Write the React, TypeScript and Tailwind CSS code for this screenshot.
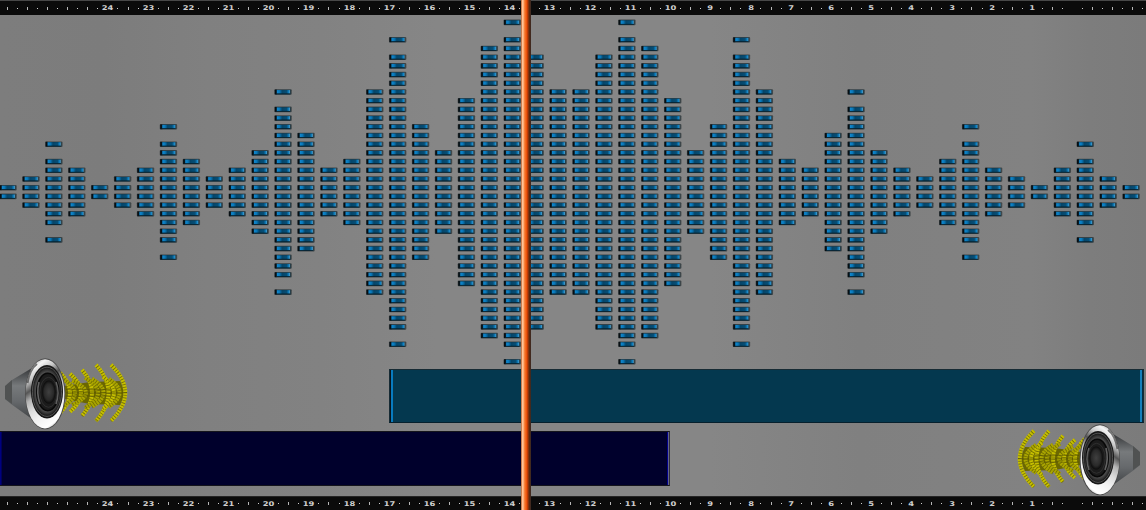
const COUNTS = [
  1, 2, 4, 3, 1, 2, 3, 6, 4, 2, 3, 5, 10, 7, 3, 4, 12, 16, 8, 5, 11, 17, 18, 16, 12,
];
const LEVELS = [...COUNTS, ...[...COUNTS].reverse()];
const PEAKS = new Set([2, 7, 12, 17, 22, 27, 32, 37, 42, 47]);
const COLUMN_STEP = 22.92;
const ROW_STEP = 8.7;

function Cell({ x, y }: { x: number; y: number }) {
  return (
    <g transform={`translate(${x} ${y})`}>
      <rect x="-8.8" y="-2.8" width="17.4" height="5.6" rx="1" fill="#404749" />
      <rect x="-8.3" y="-2.4" width="2" height="4.8" fill="#070e12" />
      <rect x="-6.7" y="-2.1" width="14" height="4.4" fill="#07344c" />
      <rect x="-6.2" y="-1.9" width="13" height="3.6" fill="url(#cell)" />
      <rect x="-7" y="1.5" width="14" height="0.7" fill="#081e29" />
    </g>
  );
}

function Waveform() {
  return (
    <svg className="block h-[354px] w-full shrink-0 overflow-visible" viewBox="0 15 1146 354">
      <defs>
        <linearGradient id="cell">
          <stop offset="0" stopColor="#1289d0" />
          <stop offset="0.2" stopColor="#0878ba" />
          <stop offset="0.4" stopColor="#064568" />
          <stop offset="0.75" stopColor="#064e76" />
          <stop offset="0.92" stopColor="#1085c8" />
          <stop offset="1" stopColor="#6aa6c4" />
        </linearGradient>
      </defs>
      {LEVELS.map((count, column) => {
        const rows = Array.from({ length: count }, (_, row) => row);
        if (PEAKS.has(column)) rows.push(count + 1);
        const x = 8.1 + column * COLUMN_STEP;
        return (
          <g key={column}>
            {rows.map((row) => (
              <g key={row}>
                <Cell x={x} y={187.7 - row * ROW_STEP} />
                <Cell x={x} y={196.4 + row * ROW_STEP} />
              </g>
            ))}
          </g>
        );
      })}
    </svg>
  );
}

function Ruler({ bottom = false }: { bottom?: boolean }) {
  const marks = Array.from({ length: 115 }, (_, i) => i - 1);
  return (
    <div
      className={
        bottom
          ? "flex h-[14px] shrink-0 items-center overflow-hidden border-t border-[#252525] bg-[#0b0b0b]"
          : "flex h-[15px] shrink-0 items-center overflow-hidden border-t border-[#484848] bg-[#0b0b0b]"
      }
    >
      <div className="-ml-[7.6px] flex h-full shrink-0 items-center">
        {marks.map((i) => {
          const major = (i + 2) % 4 === 0;
          const value = 24 - (i - 10) / 4;
          return (
            <span key={i} className="flex w-[10.06px] shrink-0 justify-center">
              {major && value >= 1 && value <= 24 ? (
                <span className="scale-x-[1.28] font-['DejaVu_Sans',sans-serif] text-[6.5px] leading-[8px] font-bold text-[#d0d0d0]">
                  {value}
                </span>
              ) : major && value === 0 ? null : (
                <span
                  className={i % 2 === 0 ? "h-[3px] w-px bg-[#b8b8b8]" : "h-px w-px bg-[#d0d0d0]"}
                />
              )}
            </span>
          );
        })}
      </div>
    </div>
  );
}

const WAVES = [
  { x: 60, y: 20, edge: 70 },
  { x: 62, y: 14, edge: 75 },
  { x: 70, y: 19, edge: 81 },
  { x: 72, y: 12, edge: 86 },
  { x: 82, y: 23, edge: 92 },
  { x: 85, y: 15, edge: 98 },
  { x: 96, y: 28, edge: 108.5 },
  { x: 92, y: 14, edge: 103.5 },
  { x: 103, y: 16, edge: 114 },
  { x: 109, y: 14, edge: 119.5 },
  { x: 111, y: 28, edge: 125.3 },
];

function Speaker({ flipped = false }: { flipped?: boolean }) {
  const id = flipped ? "right" : "left";
  return (
    <svg
      className={
        flipped
          ? "h-[54px] w-[131px] shrink-0 -scale-x-100 overflow-visible"
          : "h-[54px] w-[131px] shrink-0 overflow-visible"
      }
      viewBox="0 369 131 54"
    >
      <defs>
        <linearGradient id={`back-${id}`} x2="0" y2="1">
          <stop offset="0" stopColor="#343638" />
          <stop offset="0.35" stopColor="#777a7c" />
          <stop offset="0.65" stopColor="#66696c" />
          <stop offset="1" stopColor="#414446" />
        </linearGradient>
        <linearGradient id={`rim-${id}`} x1="0.3" y1="0" x2="0.7" y2="1">
          <stop offset="0" stopColor="#b5b5b5" />
          <stop offset="0.08" stopColor="#f4f4f4" />
          <stop offset="0.2" stopColor="#c6c6c6" />
          <stop offset="0.33" stopColor="#555555" />
          <stop offset="0.45" stopColor="#b5b5b5" />
          <stop offset="0.6" stopColor="#dddddd" />
          <stop offset="0.75" stopColor="#f2f2f2" />
          <stop offset="0.93" stopColor="#ffffff" />
          <stop offset="1" stopColor="#c5c5c5" />
        </linearGradient>
        <radialGradient id={`cone-${id}`}>
          <stop offset="0.4" stopColor="#171717" />
          <stop offset="0.66" stopColor="#1c1c1c" />
          <stop offset="0.8" stopColor="#4c4c4c" />
          <stop offset="0.9" stopColor="#303030" />
          <stop offset="1" stopColor="#101010" />
        </radialGradient>
        <radialGradient id={`cap-${id}`}>
          <stop offset="0" stopColor="#404040" />
          <stop offset="0.7" stopColor="#292929" />
          <stop offset="1" stopColor="#0b0b0b" />
        </radialGradient>
      </defs>
      <path d="M64 386L90 382 120 381Q127 392.8 120 405L90 404 64 399Z" fill="#6b6700" />
      <g fill="none">
        {WAVES.map(({ x, y, edge }, i) => {
          const d = `M${x} ${392.8 - y} Q${2 * edge - x} 392.8 ${x} ${392.8 + y}`;
          return (
            <g key={i}>
              <path d={d} stroke="#716d00" strokeWidth="3.4" />
              <path
                d={d}
                stroke={i % 2 ? "#aaa500" : "#c5be00"}
                strokeWidth="4"
                strokeDasharray="1.9 0.8"
              />
            </g>
          );
        })}
      </g>
      <path d="M66 392.8H127M66 389.5H110M66 396H110" stroke="#4f4b00" strokeWidth="0.8" opacity="0.65" />
      <path d="M5 386L12 380 32 368V419L11 404 5 399Z" fill={`url(#back-${id})`} />
      <path d="M5 386L12 380V404L5 399Z" fill="#505252" />
      <ellipse cx="45.2" cy="393.8" rx="20.2" ry="35.5" fill="#4b4b4b" />
      <ellipse cx="45" cy="393.8" rx="19.4" ry="34.6" fill={`url(#rim-${id})`} />
      <path d="M27.5 383Q30 369 37 364" fill="none" stroke="#333333" strokeWidth="2" opacity="0.65" />
      <ellipse cx="47" cy="391.8" rx="16" ry="26.8" fill="#161616" />
      <ellipse cx="47" cy="391.8" rx="14.6" ry="24.6" fill={`url(#cone-${id})`} stroke="#626262" strokeWidth="0.8" />
      <ellipse cx="47.8" cy="392" rx="11" ry="18.7" fill="#1b1b1b" stroke="#080808" strokeWidth="1.5" />
      <path d="M39 382Q36 393 40 404M56 382Q60 393 56 404" fill="none" stroke="#8e8e8e" strokeWidth="1.6" opacity="0.65" />
      <ellipse cx="48.5" cy="392.3" rx="8.7" ry="15" fill="none" stroke="#383838" strokeWidth="0.7" />
      <ellipse cx="48.8" cy="392" rx="6.7" ry="11.5" fill={`url(#cap-${id})`} />
    </svg>
  );
}

export default function App() {
  return (
    <main className="relative flex h-[510px] w-[1146px] flex-col overflow-hidden bg-[linear-gradient(90deg,#7d7d7d_0%,#7c7c7c_9%,#808080_18%,#828282_28%,#868686_38%,#868686_62%,#808080_75%,#828282_90%,#7d7d7d_95%,#7b7b7b_100%)]">
      <Ruler />
      <Waveform />
      <div className="flex h-[54px] shrink-0 pr-[2px]">
        <Speaker />
        <div className="ml-[258px] flex flex-1 border border-[#172b34] border-b-[#06202d] bg-[#04384f]">
          <div className="w-px bg-[#07141c]" />
          <div className="w-[2px] bg-[#087bbf]" />
          <div className="flex-1" />
          <div className="w-[2px] bg-[#147fbb]" />
          <div className="w-px bg-[#062b40]" />
        </div>
      </div>
      <div className="mt-[8px] flex h-[55px] shrink-0 justify-between">
        <div className="flex w-[670px] border-y border-r border-y-[#15151c] border-r-[#30303c] bg-[#00002c]">
          <div className="w-px bg-[#000080]" />
          <div className="w-px bg-[#00005b]" />
          <div className="flex-1" />
          <div className="w-px bg-[#00008a]" />
          <div className="w-px bg-[#656589]" />
        </div>
        <div className="mt-[4px] mr-px">
          <Speaker flipped />
        </div>
      </div>
      <div className="h-[10px] shrink-0" />
      <Ruler bottom />
      <div className="absolute top-0 left-[521px] h-full w-[9.5px] bg-[linear-gradient(90deg,#a95524_0%,#ffc59b_14%,#ffad76_26%,#f4762c_38%,#f65c11_52%,#c23b05_65%,#713010_78%,#3c2014_92%,#4b3a32_100%)]" />
    </main>
  );
}
